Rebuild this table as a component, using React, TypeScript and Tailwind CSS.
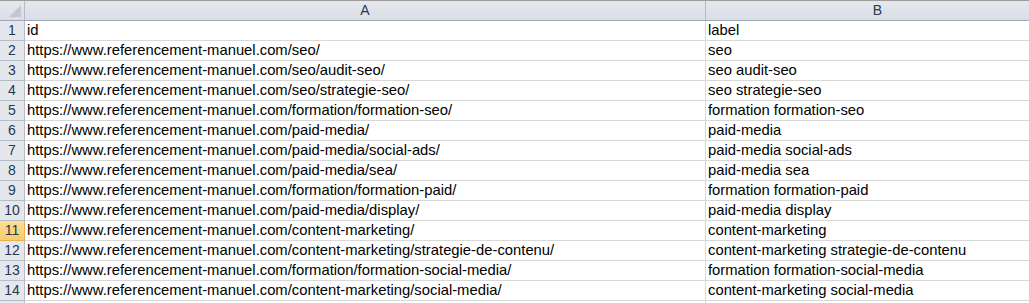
const rows: [string, string][] = [
  ["id", "label"],
  ["https://www.referencement-manuel.com/seo/", "seo"],
  ["https://www.referencement-manuel.com/seo/audit-seo/", "seo audit-seo"],
  ["https://www.referencement-manuel.com/seo/strategie-seo/", "seo strategie-seo"],
  ["https://www.referencement-manuel.com/formation/formation-seo/", "formation formation-seo"],
  ["https://www.referencement-manuel.com/paid-media/", "paid-media"],
  ["https://www.referencement-manuel.com/paid-media/social-ads/", "paid-media social-ads"],
  ["https://www.referencement-manuel.com/paid-media/sea/", "paid-media sea"],
  ["https://www.referencement-manuel.com/formation/formation-paid/", "formation formation-paid"],
  ["https://www.referencement-manuel.com/paid-media/display/", "paid-media display"],
  ["https://www.referencement-manuel.com/content-marketing/", "content-marketing"],
  ["https://www.referencement-manuel.com/content-marketing/strategie-de-contenu/", "content-marketing strategie-de-contenu"],
  ["https://www.referencement-manuel.com/formation/formation-social-media/", "formation formation-social-media"],
  ["https://www.referencement-manuel.com/content-marketing/social-media/", "content-marketing social-media"],
];

const SELECTED = 11;

export default function App() {
  return (
    <div
      className="w-[1029px] h-[303px] overflow-hidden bg-white text-[14.8px] text-black"
      style={{ fontFamily: '"Liberation Sans", Arial, sans-serif' }}
    >
      {/* column headers */}
      <div className="flex h-[21px] border-t border-b border-t-[#9c9c9c] border-b-[#9eaabb] bg-gradient-to-b from-[#e4e8ed] to-[#dbdfe5]">
        <div className="w-[25px] shrink-0 border-r border-[#b5bcc6] flex items-end justify-end p-[3px]">
          <svg width="12" height="12" viewBox="0 0 12 12">
            <polygon points="12,0 12,12 0,12" fill="#c3c8cf" />
          </svg>
        </div>
        <div className="w-[681px] shrink-0 border-r border-[#b5bcc6] flex items-center justify-center text-[14px] text-[#27384f]">
          A
        </div>
        <div className="flex-1 min-w-[343px] shrink-0 flex items-center justify-center text-[14px] text-[#27384f]">
          B
        </div>
      </div>

      {rows.map(([a, b], i) => {
        const n = i + 1;
        const sel = n === SELECTED;
        return (
          <div key={n} className="flex h-[20px] border-b border-[#d8d8d8]">
            <div
              className={
                sel
                  ? "w-[25px] shrink-0 -mb-px border-r border-b border-[#e9b04f] bg-gradient-to-b from-[#fbdf94] to-[#f7cc6a] text-[#27384f] text-[14px] flex items-center justify-center"
                  : "w-[25px] shrink-0 -mb-px border-r border-b border-[#b5bcc6] bg-[#e4e8ed] text-[#27384f] text-[14px] flex items-center justify-center"
              }
            >
              {n}
            </div>
            <div className="w-[681px] shrink-0 border-r border-[#d8d8d8] pl-[2px] flex items-center whitespace-nowrap overflow-hidden">
              {a}
            </div>
            <div className="flex-1 pl-[2px] flex items-center whitespace-nowrap overflow-hidden">
              {b}
            </div>
          </div>
        );
      })}

      {/* partially visible row 15 */}
      <div className="flex h-[20px]">
        <div className="w-[25px] shrink-0 border-r border-[#b5bcc6] bg-[#e4e8ed]" />
        <div className="w-[681px] shrink-0 border-r border-[#d8d8d8]" />
        <div className="flex-1" />
      </div>
    </div>
  );
}
